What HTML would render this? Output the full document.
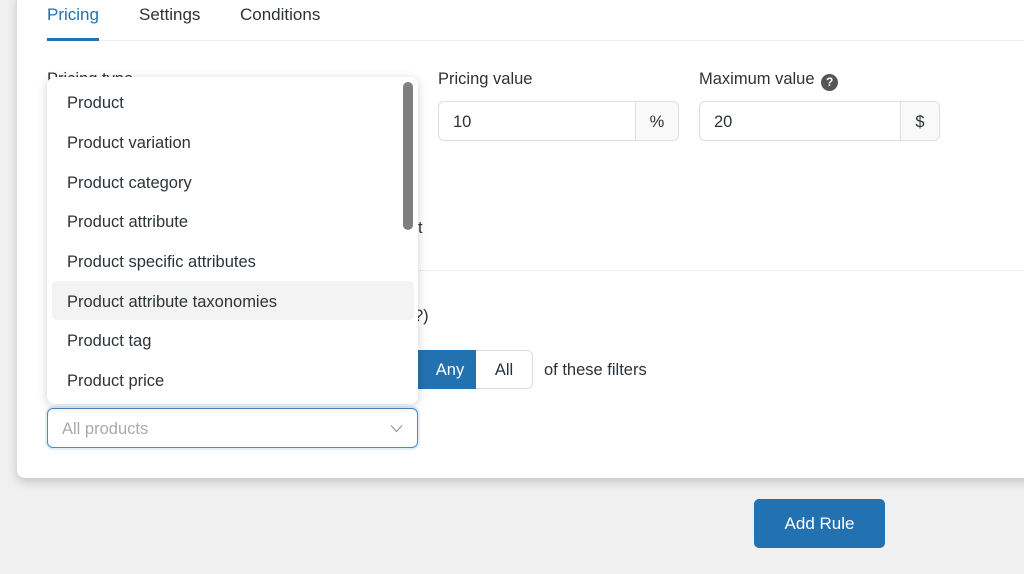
<!DOCTYPE html>
<html><head><meta charset="utf-8"><style>
*{box-sizing:border-box;margin:0;padding:0}
body{width:1024px;height:574px;overflow:hidden;background:#f0f0f0;font-family:"Liberation Sans",sans-serif;color:#2c3338;position:relative}
.card{position:absolute;left:17px;top:-10px;width:1030px;height:488px;background:#fff;border-radius:8px;box-shadow:0 4px 10px rgba(0,0,0,.18)}
.a{position:absolute;white-space:nowrap}
.tab{font-size:17px;top:5px}
.lbl{font-size:16.5px;top:70px}
.inp{position:absolute;top:101px;height:40px;border:1px solid #ddd;border-radius:6px;background:#fff;font-size:16.5px}
.inp span{position:absolute;top:11px;left:14px}
.inp .ad{position:absolute;right:0;top:0;bottom:0;width:43px;border-left:1px solid #ddd;background:#f9f9f9;border-radius:0 6px 6px 0;text-align:center;line-height:40px}
.dd{position:absolute;left:47px;top:77px;width:371px;height:327px;background:#fff;border-radius:8px;box-shadow:0 2px 10px rgba(0,0,0,.18)}
.it{position:absolute;left:20px;font-size:16.5px;color:#2c3338}
.hl{position:absolute;left:5px;top:204px;width:362px;height:39px;background:#f3f3f3;border-radius:5px}
.sb{position:absolute;left:356px;top:5px;width:10px;height:148px;background:#7f7f7f;border-radius:5px}
</style></head><body>
<div class="card"></div>
<div class="a tab" style="left:47px;color:#2271b1">Pricing</div>
<div class="a tab" style="left:139px">Settings</div>
<div class="a tab" style="left:240px">Conditions</div>
<div class="a" style="left:47px;top:40px;width:977px;height:1px;background:#eee"></div>
<div class="a" style="left:47px;top:38px;width:52px;height:3px;background:#2271b1"></div>
<div class="a lbl" style="left:47px">Pricing type</div>
<div class="a lbl" style="left:438px">Pricing value</div>
<div class="a lbl" style="left:699px">Maximum value <span style="display:inline-block;width:17px;height:17px;border-radius:50%;background:#555;color:#fff;font-size:12px;font-weight:bold;text-align:center;line-height:17px;vertical-align:-2px;margin-left:2px">?</span></div>
<div class="inp" style="left:438px;width:241px"><span>10</span><div class="ad">%</div></div>
<div class="inp" style="left:699px;width:241px"><span>20</span><div class="ad" style="width:39px">$</div></div>
<div class="a" style="left:418px;top:219px;font-size:16.5px">t</div>
<div class="a" style="left:418px;top:270px;width:606px;height:1px;background:#eee"></div>
<div class="a" style="left:414px;top:307px;font-size:16.5px">?)</div>
<div class="a" style="left:418px;top:350px;width:58px;height:39px;background:#2271b1;color:#fff;font-size:16.5px;line-height:41px;text-align:center;padding-left:6px">Any</div>
<div class="a" style="left:476px;top:350px;width:57px;height:39px;border:1px solid #ddd;border-left:none;border-radius:0 6px 6px 0;font-size:16.5px;line-height:39px;text-align:center">All</div>
<div class="a" style="left:544px;top:361px;font-size:16.5px">of these filters</div>
<div class="a" style="left:47px;top:408px;width:371px;height:40px;border:1px solid #4a8ac4;border-radius:6px;box-shadow:0 0 0 2px #e4eef8;background:#fff"><span style="position:absolute;left:14px;top:11px;font-size:16.5px;color:#aaa">All products</span>
<svg style="position:absolute;left:342px;top:15px" width="13" height="9" viewBox="0 0 13 9"><path d="M1 1.5l5.5 6 5.5-6" fill="none" stroke="#999" stroke-width="1.2"/></svg></div>
<div class="dd"><div class="hl"></div><div class="sb"></div>
<div class="it" style="top:17px">Product</div>
<div class="it" style="top:57px">Product variation</div>
<div class="it" style="top:97px">Product category</div>
<div class="it" style="top:136px">Product attribute</div>
<div class="it" style="top:176px">Product specific attributes</div>
<div class="it" style="top:216px">Product attribute taxonomies</div>
<div class="it" style="top:255px">Product tag</div>
<div class="it" style="top:295px">Product price</div>
</div>
<div class="a" style="left:754px;top:499px;width:131px;height:49px;background:#2271b1;border-radius:5px;color:#fff;font-size:17px;line-height:50px;text-align:center">Add Rule</div>
</body></html>
